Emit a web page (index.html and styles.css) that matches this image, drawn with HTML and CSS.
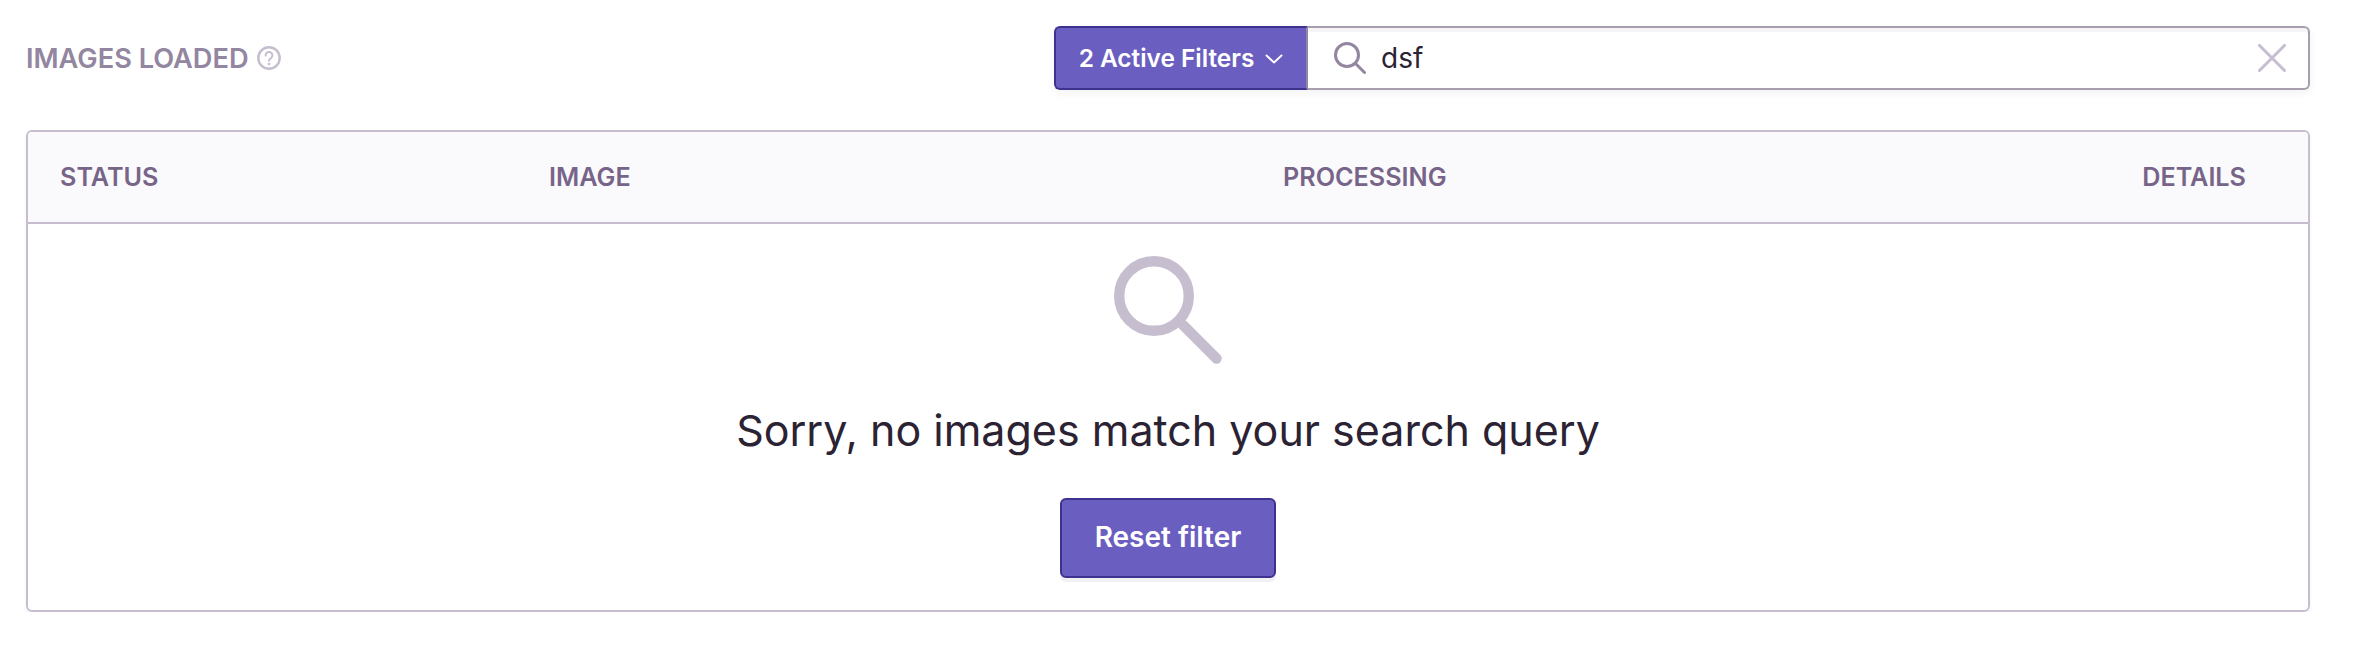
FILE: index.html
```html
<!DOCTYPE html>
<html lang="en">
<head>
  <meta charset="UTF-8" />
  <title>Images Loaded</title>
  <link rel="stylesheet" href="styles.css">
</head>
<body>
  <div class="toolbar">
    <div class="section-title">
      <span>IMAGES LOADED</span>
      <svg class="help-icon" viewBox="0 0 24 24" fill="none">
        <circle cx="12" cy="12" r="10.7" stroke="#c6becf" stroke-width="2.4"/>
        <path d="M8.6 9.4a3.4 3.4 0 1 1 5.2 2.9c-1.2.7-1.8 1.3-1.8 2.5" stroke="#c6becf" stroke-width="2" stroke-linecap="round"/>
        <circle cx="12" cy="18" r="1.3" fill="#c6becf"/>
      </svg>
    </div>
    <div class="search-group">
      <button class="filter-btn">
        <span>2 Active Filters</span>
        <svg class="chevron" viewBox="0 0 18 10" fill="none">
          <path d="M1.5 1.5L9 8.5L16.5 1.5" stroke="#fff" stroke-width="1.9" stroke-linecap="round" stroke-linejoin="round"/>
        </svg>
      </button>
      <div class="search-box">
        <svg class="search-icon" viewBox="0 0 32 32" fill="none">
          <circle cx="13" cy="13" r="11.5" stroke="#9386a0" stroke-width="3"/>
          <path d="M21.5 21.5L30.5 30.5" stroke="#9386a0" stroke-width="3" stroke-linecap="round"/>
        </svg>
        <span class="search-value">dsf</span>
        <svg class="clear-icon" viewBox="0 0 28 28" fill="none">
          <path d="M1.5 1.5L26.5 26.5M26.5 1.5L1.5 26.5" stroke="#c6becf" stroke-width="3" stroke-linecap="round"/>
        </svg>
      </div>
    </div>
  </div>

  <div class="panel">
    <div class="panel-header">
      <div>STATUS</div>
      <div>IMAGE</div>
      <div>PROCESSING</div>
      <div class="details">DETAILS</div>
    </div>
    <div class="empty">
      <svg class="empty-icon" viewBox="0 0 108 108" fill="none">
        <circle cx="40" cy="40" r="34.8" stroke="#c6becf" stroke-width="10.4"/>
        <path d="M69 69L102.5 102.5" stroke="#c6becf" stroke-width="10.4" stroke-linecap="round"/>
      </svg>
      <p class="empty-text">Sorry, no images match your search query</p>
      <button class="reset-btn">Reset filter</button>
    </div>
  </div>
</body>
</html>
```

FILE: styles.css
```css
* {
  box-sizing: border-box;
}

body {
  margin: 0;
  padding: 26px 54px 0 26px;
  background: #fff;
  font-family: Inter, "Noto Sans", sans-serif;
  color: #2b2233;
}

.toolbar {
  display: flex;
  justify-content: space-between;
  align-items: center;
  margin-bottom: 40px;
}

.section-title {
  display: flex;
  align-items: center;
  gap: 8px;
  font-size: 27.2px;
  font-weight: 600;
  color: #9386a0;
}

.help-icon {
  width: 24px;
  height: 24px;
}

.search-group {
  display: flex;
  width: 1256px;
  height: 64px;
  border-radius: 6px;
  box-shadow: 0 3px 10px rgba(43, 34, 51, 0.06);
}

.filter-btn {
  display: flex;
  align-items: center;
  justify-content: center;
  gap: 11px;
  width: 254px;
  padding: 0;
  border: 2px solid #3d328e;
  border-right: 2px solid #9386a0;
  border-radius: 6px 0 0 6px;
  background: #6a5fc1;
  color: #fff;
  font-family: inherit;
  font-size: 24.4px;
  font-weight: 600;
}

.chevron {
  width: 18px;
  height: 10px;
  margin-top: 2px;
}

.search-box {
  flex: 1;
  display: flex;
  align-items: center;
  padding: 0 22px 0 26px;
  border: 2px solid #a79fb0;
  border-left: none;
  border-radius: 0 6px 6px 0;
  box-shadow: inset 0 4px 0 #f5f4f6;
}

.search-icon {
  width: 32px;
  height: 32px;
}

.search-value {
  flex: 1;
  margin-left: 15px;
  font-size: 28px;
}

.clear-icon {
  width: 28px;
  height: 28px;
}

.panel {
  height: 482px;
  border: 2px solid #c6becf;
  border-radius: 6px;
  box-shadow: 0 3px 4px rgba(43, 34, 51, 0.05);
}

.panel-header {
  display: grid;
  grid-template-columns: 489px 734px 1fr auto;
  align-items: center;
  height: 92px;
  padding: 0 62px 0 32px;
  border-bottom: 2px solid #c6becf;
  border-radius: 4px 4px 0 0;
  background: #faf9fb;
  font-size: 25.2px;
  font-weight: 600;
  color: #776589;
}

.empty {
  display: flex;
  flex-direction: column;
  align-items: center;
  padding-top: 32px;
}

.empty-icon {
  width: 108px;
  height: 108px;
  margin-bottom: 39px;
}

.empty-text {
  margin: 0 0 41px;
  font-size: 43px;
  line-height: 54px;
}

.reset-btn {
  width: 216px;
  height: 80px;
  padding: 0 0 3px;
  border: 2px solid #3d328e;
  border-radius: 6px;
  background: #6a5fc1;
  color: #fff;
  font-family: inherit;
  font-size: 28px;
  font-weight: 600;
  box-shadow: 0 4px 0 #f1f0f3;
}
```
